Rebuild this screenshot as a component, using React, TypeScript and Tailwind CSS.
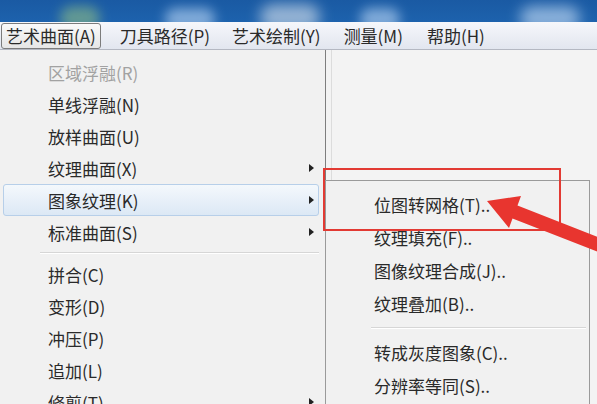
import React from "react"

const font = { fontFamily: '"Noto Sans CJK SC", "Noto Sans", sans-serif' }

type Item = { label: string; sub?: boolean; disabled?: boolean; active?: boolean; sep?: boolean }

const mainItems: Item[] = [
  { label: "区域浮融(R)", disabled: true },
  { label: "单线浮融(N)" },
  { label: "放样曲面(U)" },
  { label: "纹理曲面(X)", sub: true },
  { label: "图象纹理(K)", sub: true, active: true },
  { label: "标准曲面(S)", sub: true },
  { label: "", sep: true },
  { label: "拼合(C)" },
  { label: "变形(D)" },
  { label: "冲压(P)" },
  { label: "追加(L)" },
  { label: "修剪(T)", sub: true },
]

const subItems: Item[] = [
  { label: "位图转网格(T).." },
  { label: "纹理填充(F).." },
  { label: "图像纹理合成(J).." },
  { label: "纹理叠加(B).." },
  { label: "", sep: true },
  { label: "转成灰度图象(C).." },
  { label: "分辨率等同(S).." },
]

function SubArrow() {
  return (
    <svg width="5" height="8" viewBox="0 0 5 8" className="shrink-0">
      <polygon points="0,0 5,4 0,8" fill="#222" />
    </svg>
  )
}

export default function App() {
  return (
    <div className="relative w-[597px] h-[404px] overflow-hidden bg-[#f3f3f3] text-[#2a2a2a]" style={font}>
      {/* blue desktop strip */}
      <div className="relative h-[22px] overflow-hidden bg-gradient-to-b from-[#1a5aa3] to-[#1d62ad]">
        <div className="absolute left-[60px] top-[6px] w-[40px] h-[24px] rounded-full bg-[#7fb08a] blur-[6px] opacity-70" />
        <div className="absolute left-[165px] top-[8px] w-[50px] h-[22px] rounded-full bg-[#a9c9ec] blur-[6px] opacity-70" />
        <div className="absolute left-[260px] top-[4px] w-[60px] h-[26px] rounded-full bg-[#c7d6e6] blur-[7px] opacity-70" />
        <div className="absolute left-[360px] top-[8px] w-[40px] h-[22px] rounded-full bg-[#a9c9ec] blur-[6px] opacity-70" />
        <div className="absolute left-[520px] top-[6px] w-[60px] h-[24px] rounded-full bg-[#b9d3ef] blur-[7px] opacity-70" />
      </div>

      {/* menu bar */}
      <div className="flex items-center gap-[10px] h-[28px] pl-[1px] bg-gradient-to-b from-[#f6f7fb] to-[#e2e6ef] border-b border-[#b4b8c2] text-[17px] leading-none">
        <div className="h-[26px] flex items-center px-[4px] rounded-[3px] border border-[#7c7c7c] bg-gradient-to-b from-[#fafafa] to-[#e6e6e6]">
          艺术曲面(A)
        </div>
        <div className="px-[5px] ml-[4px]">刀具路径(P)</div>
        <div className="px-[5px] ml-[2px]">艺术绘制(Y)</div>
        <div className="px-[5px] ml-[3px]">测量(M)</div>
        <div className="px-[5px] ml-[4px]">帮助(H)</div>
      </div>

      {/* dropdown */}
      <div className="flex">
        <div className="w-[326px] border-r border-[#7e7e7e] bg-[#f1f1f1] pt-[6px] pl-[3px] pr-[6px] text-[17px] leading-none">
          {mainItems.map((it, i) =>
            it.sep ? (
              <div key={i} className="h-[10px] flex items-center pl-[37px]">
                <div className="w-full h-[2px] border-t border-[#d6d6d6] border-b border-b-white" />
              </div>
            ) : (
              <div
                key={i}
                className={`h-[32px] flex items-center justify-between pl-[44px] pr-[4px] rounded-[3px] border ${
                  it.active
                    ? "border-[#b7cfe9] bg-gradient-to-b from-[#f4f8fc] to-[#dce8f5]"
                    : "border-transparent"
                } ${it.disabled ? "text-[#a2a2a2]" : ""}`}
              >
                <span>{it.label}</span>
                {it.sub && <SubArrow />}
              </div>
            )
          )}
        </div>
        <div className="w-[6px] border-r border-[#dcdcdc]" />
      </div>

      {/* submenu */}
      <div className="absolute left-[325px] top-[180px] w-[265px] h-[240px] border border-[#9a9a9a] bg-[#f1f1f1] pt-[7px] px-[3px] text-[17px] leading-none">
        {subItems.map((it, i) =>
          it.sep ? (
            <div key={i} className="h-[16px] flex items-center pl-[42px]">
              <div className="w-full h-[2px] border-t border-[#d6d6d6] border-b border-b-white" />
            </div>
          ) : (
            <div key={i} className="h-[33px] flex items-center pl-[45px]">
              {it.label}
            </div>
          )
        )}
      </div>

      {/* red highlight box */}
      <div className="absolute left-[323px] top-[168px] w-[238px] h-[63px] border-2 border-[#e23a33]" />

      {/* red arrow */}
      <svg className="absolute inset-0 pointer-events-none" width="597" height="404" viewBox="0 0 597 404">
        <polygon
          points="487,201 521,196 517.5,205.5 610.5,241.9 605.5,254.9 512.5,218.5 509,228"
          fill="#e8352f"
          style={{ filter: "blur(0.6px)" }}
        />
      </svg>
    </div>
  )
}
